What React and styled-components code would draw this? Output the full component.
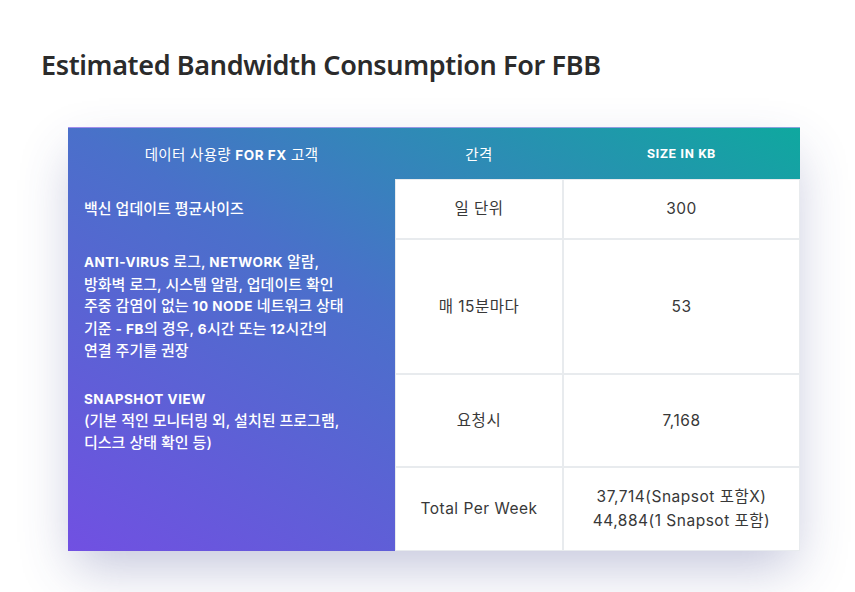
import React from 'react';
import styled, { createGlobalStyle } from 'styled-components';

const GlobalStyle = createGlobalStyle`
  body {
    margin: 0;
    background: #ffffff;
    font-family: Inter, "Noto Sans CJK KR", sans-serif;
  }
`;

const B = styled.b`
  font-weight: 700;
  font-size: 13.5px;
  letter-spacing: 0.5px;
  font-family: Inter, "Noto Sans CJK KR", sans-serif;
`;

const rows = [
  {
    label: <>백신 업데이트 평균사이즈</>,
    interval: '일 단위',
    size: ['300'],
    height: 60,
  },
  {
    label: (
      <>
        <B>ANTI-VIRUS</B> 로그, <B>NETWORK</B> 알람,<br />
        방화벽 로그, 시스템 알람, 업데이트 확인<br />
        주중 감염이 없는 <B>10 NODE</B> 네트워크 상태<br />
        기준 <B>- FB</B>의 경우, <B>6</B>시간 또는 <B>12</B>시간의<br />
        연결 주기를 권장
      </>
    ),
    interval: '매 15분마다',
    size: ['53'],
    height: 135,
  },
  {
    label: (
      <>
        <B>SNAPSHOT VIEW</B><br />
        (기본 적인 모니터링 외, 설치된 프로그램,<br />
        디스크 상태 확인 등)
      </>
    ),
    interval: '요청시',
    size: ['7,168'],
    height: 93,
  },
  {
    label: null,
    interval: 'Total Per Week',
    size: ['37,714(Snapsot 포함X)', '44,884(1 Snapsot 포함)'],
    height: 84,
  },
];

function App() {
  return (
    <Page>
      <GlobalStyle />
      <Title>Estimated Bandwidth Consumption For FBB</Title>
      <Table $rows={rows.map((r) => r.height + 'px').join(' ')}>
        <HeadCell>
          <span>데이터 사용량 <B>FOR FX</B> 고객</span>
        </HeadCell>
        <HeadCell>간격</HeadCell>
        <HeadCell $strong>SIZE IN KB</HeadCell>
        {rows.map((r, i) => (
          <React.Fragment key={i}>
            <LabelCell>{r.label && <span>{r.label}</span>}</LabelCell>
            <ValueCell>{r.interval}</ValueCell>
            <ValueCell>
              {r.size.map((s) => (
                <span key={s}>{s}</span>
              ))}
            </ValueCell>
          </React.Fragment>
        ))}
      </Table>
    </Page>
  );
}

const Page = styled.div`
  padding: 46px 41px 42px;
`;

const Title = styled.h1`
  margin: 0 0 43px;
  font-family: "Noto Sans", "Noto Sans CJK KR", sans-serif;
  font-weight: 600;
  font-size: 27px;
  line-height: 38px;
  color: #2b2b2b;
  letter-spacing: -0.35px;
`;

const Table = styled.div`
  margin-left: 27px;
  width: 732px;
  display: grid;
  grid-template-columns: 327px 168px 237px;
  grid-template-rows: 51px ${(p) => p.$rows};
  background: linear-gradient(to top right, #7150e2 0%, #4a70ca 50%, #0fa89f 100%);
  box-shadow: 0 22px 50px -6px rgba(55, 64, 135, 0.3);
  border-top: 1px solid rgba(255, 255, 255, 0.35);
`;

const HeadCell = styled.div`
  display: flex;
  align-items: center;
  justify-content: center;
  color: #ffffff;
  font-size: ${(p) => (p.$strong ? '13px' : '14.5px')};
  font-weight: ${(p) => (p.$strong ? 700 : 400)};
  font-family: ${(p) => (p.$strong ? 'Roboto, sans-serif' : 'Inter, "Noto Sans CJK KR", sans-serif')};
  letter-spacing: ${(p) => (p.$strong ? '0.6px' : '0.3px')};
`;

const LabelCell = styled.div`
  display: flex;
  align-items: center;
  padding: 0 16px;
  color: #ffffff;
  font-size: 15px;
  line-height: 21.5px;
  font-weight: 500;
`;

const ValueCell = styled.div`
  display: flex;
  flex-direction: column;
  align-items: center;
  justify-content: center;
  background: #ffffff;
  border: 1px solid #e8ebee;
  color: #383838;
  font-size: 15.5px;
  letter-spacing: 0.5px;
  line-height: 24px;
`;

export default App;
